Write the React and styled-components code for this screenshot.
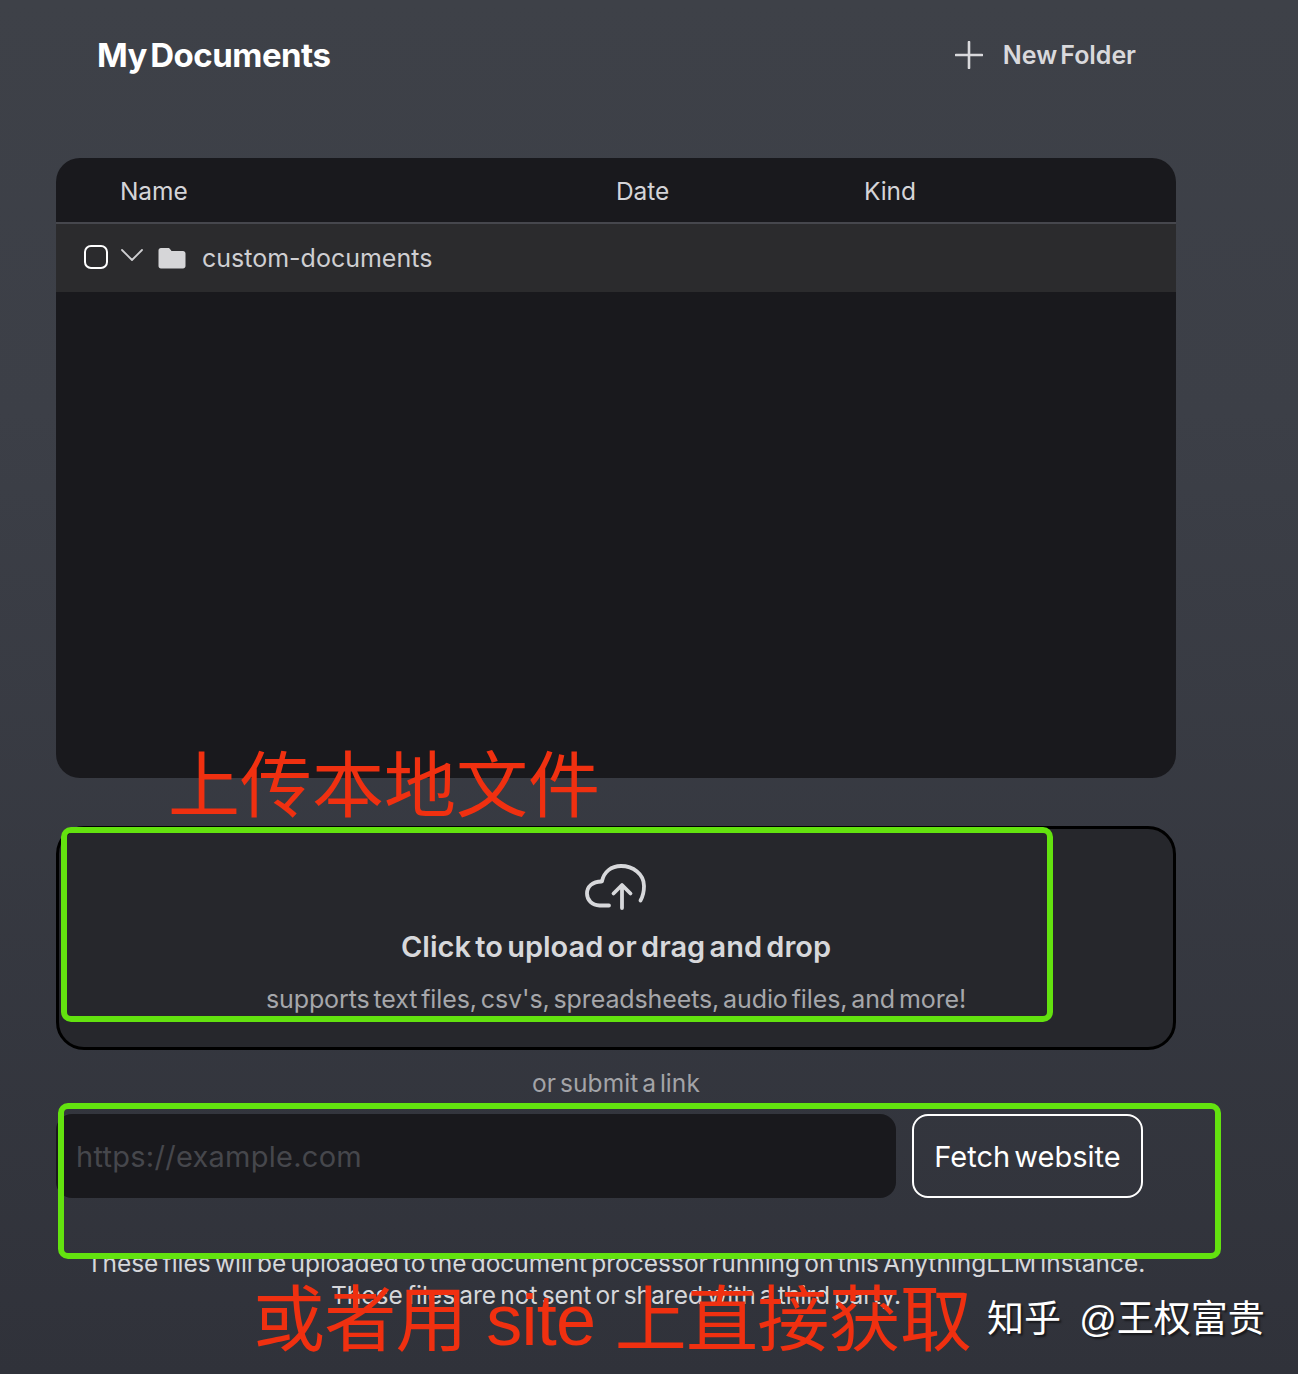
import React from "react";
import styled, { createGlobalStyle } from "styled-components";

const Global = createGlobalStyle`
  html, body { margin: 0; padding: 0; background: #30323a; }
  * { box-sizing: border-box; }
`;

const Page = styled.div`
  position: relative;
  width: 1298px;
  height: 1374px;
  overflow: hidden;
  padding-left: 56px;
  background: linear-gradient(180deg, #3e4148 0%, #3c3f47 30%, #30323a 100%);
  font-family: Inter, "Open Sans", sans-serif;
`;

const Column = styled.div`
  width: 1120px;
  display: flex;
  flex-direction: column;
`;

const Header = styled.header`
  height: 158px;
  padding: 36px 40px 0 41px;
  display: flex;
  justify-content: space-between;
  align-items: flex-start;
`;

const Title = styled.h1`
  margin: 0;
  font-size: 33px;
  line-height: 38px;
  font-weight: 700;
  letter-spacing: -0.5px;
  word-spacing: -4px;
  color: #fff;
`;

const NewFolder = styled.button`
  display: flex;
  align-items: center;
  gap: 20px;
  padding: 0;
  height: 38px;
  border: 0;
  background: none;
  font: 600 25px Inter, sans-serif;
  letter-spacing: -0.05px;
  word-spacing: -3px;
  color: #d9d9dc;
`;

const Table = styled.section`
  height: 620px;
  border-radius: 24px;
  background: #19191d;
  overflow: hidden;
`;

const HeadRow = styled.div`
  height: 66px;
  display: grid;
  grid-template-columns: 496px 248px 1fr;
  padding: 2px 0 0 64px;
  align-items: center;
  border-bottom: 2px solid #46474d;
  font-size: 24.5px;
  letter-spacing: -0.1px;
  color: #d4d4d8;
`;

const FolderRow = styled.div`
  height: 68px;
  display: flex;
  align-items: center;
  padding: 0 0 0 28px;
  background: #2b2b2d;
  font-size: 25px;
  color: #cfcfd2;
`;

const Check = styled.span`
  width: 24px;
  height: 24px;
  margin-top: -2px;
  border: 2px solid #fff;
  border-radius: 7px;
`;

const Chevron = styled.svg`
  margin: -6px 0 0 12px;
`;

const Folder = styled.svg`
  margin: -1px 0 0 14px;
`;

const FolderName = styled.span`
  margin-left: 16px;
`;

const Drop = styled.section`
  margin-top: 48px;
  height: 224px;
  padding-top: 33px;
  border: 3px solid #000;
  border-radius: 28px;
  background: #26272c;
  display: flex;
  flex-direction: column;
  align-items: center;
`;

const DropTitle = styled.div`
  margin-top: 19px;
  font-size: 29px;
  line-height: 36px;
  font-weight: 600;
  letter-spacing: 0;
  word-spacing: -3px;
  color: #d7d8db;
`;

const DropHint = styled.div`
  margin-top: 18px;
  font-size: 25px;
  line-height: 32px;
  letter-spacing: -0.11px;
  word-spacing: -3px;
  color: #a6a7ab;
`;

const Or = styled.div`
  margin-top: 18px;
  height: 30px;
  line-height: 30px;
  text-align: center;
  font-size: 24.5px;
  letter-spacing: 0.05px;
  word-spacing: -3px;
  color: #a3a4a8;
`;

const LinkRow = styled.div`
  margin-top: 16px;
  display: flex;
  gap: 16px;
`;

const UrlInput = styled.div`
  width: 840px;
  height: 84px;
  padding: 0 0 0 20px;
  display: flex;
  align-items: center;
  border-radius: 16px;
  background: #19191d;
  font-size: 29px;
  letter-spacing: 0.27px;
  color: #46474c;
`;

const Fetch = styled.button`
  width: 231px;
  height: 84px;
  padding: 0;
  border: 2px solid #fff;
  border-radius: 16px;
  background: none;
  font: 400 29px Inter, sans-serif;
  letter-spacing: 0;
  word-spacing: -4px;
  color: #fff;
`;

const Notes = styled.p`
  margin: 49px 0 0;
  text-align: center;
  font-size: 24.5px;
  line-height: 32px;
  letter-spacing: 0;
  word-spacing: -2.7px;
  color: #d6d7da;
`;

const GreenBox = styled.div`
  position: absolute;
  left: ${(p) => p.$x}px;
  top: ${(p) => p.$y}px;
  width: ${(p) => p.$w}px;
  height: ${(p) => p.$h}px;
  border: 6px solid #63e20f;
  border-radius: 10px;
`;

const Note = styled.div`
  position: absolute;
  left: ${(p) => p.$x}px;
  top: ${(p) => p.$y}px;
  white-space: nowrap;
  font-family: "Liberation Sans", "Noto Sans CJK SC", sans-serif;
  font-size: 72px;
  line-height: 1;
  letter-spacing: ${(p) => p.$sp || 0}px;
  color: #f03010;
`;

const Watermark = styled.div`
  position: absolute;
  left: 987px;
  top: 1301px;
  white-space: nowrap;
  font-family: "Liberation Sans", "Noto Sans CJK SC", sans-serif;
  font-size: 37px;
  word-spacing: 8px;
  line-height: 1;
  color: #fff;
  text-shadow: 2px 2px 2px rgba(0, 0, 0, 0.55);
`;

export default function App() {
  return (
    <Page>
      <Global />
      <Column>
        <Header>
          <Title>My Documents</Title>
          <NewFolder>
            <svg width="28" height="28" viewBox="0 0 28 28" fill="none" stroke="#d9d9dc" strokeWidth="2.6" strokeLinecap="round">
              <path d="M14 1v26M1 14h26" />
            </svg>
            New Folder
          </NewFolder>
        </Header>
        <Table>
          <HeadRow>
            <span>Name</span>
            <span>Date</span>
            <span>Kind</span>
          </HeadRow>
          <FolderRow>
            <Check />
            <Chevron width="24" height="14" viewBox="0 0 24 14" fill="none" stroke="#cfcfd2" strokeWidth="1.8" strokeLinecap="round" strokeLinejoin="round">
              <path d="M2 2l10 10L22 2" />
            </Chevron>
            <Folder width="28" height="22" viewBox="0 0 28 22" fill="#d6d6d8">
              <path d="M3 1h7c1 0 1.600.4 2.200 1.200L13.500 4H25c1.400 0 2.500 1 2.500 2.400V19c0 1.500-1.100 2.500-2.500 2.500H3C1.500 21.500.5 20.500.5 19V3.500C.5 2 1.500 1 3 1z" />
            </Folder>
            <FolderName>custom-documents</FolderName>
          </FolderRow>
        </Table>
        <Drop>
          <svg width="62" height="48" viewBox="0 0 62 48" fill="none" stroke="#d7d8db" strokeWidth="3.800" strokeLinecap="round" strokeLinejoin="round">
            <path d="M24 43.500H14.500C7 43.500 2 38 2 31.500 2 24.500 7.500 19.500 16.500 19.500" />
            <path d="M17 19C19 10 26 4 36 4c12 0 23 8 23 20 0 6-1.500 11-3.500 14.500" />
            <path d="M37 46V24M28.500 31.500L37 23l8.500 8.500" />
          </svg>
          <DropTitle>Click to upload or drag and drop</DropTitle>
          <DropHint>supports text files, csv's, spreadsheets, audio files, and more!</DropHint>
        </Drop>
        <Or>or submit a link</Or>
        <LinkRow>
          <UrlInput>https://example.com</UrlInput>
          <Fetch>Fetch website</Fetch>
        </LinkRow>
        <Notes>
          These files will be uploaded to the document processor running on this AnythingLLM instance.
          <br />
          These files are not sent or shared with a third party.
        </Notes>
      </Column>
      <GreenBox $x={61} $y={827} $w={992} $h={195} />
      <GreenBox $x={58} $y={1103} $w={1163} $h={156} />
      <Note $x={168} $y={750}>上传本地文件</Note>
      <Note $x={253} $y={1284} $sp={-0.7}>或者用 site 上直接获取</Note>
      <Watermark>知乎 @王权富贵</Watermark>
    </Page>
  );
}
